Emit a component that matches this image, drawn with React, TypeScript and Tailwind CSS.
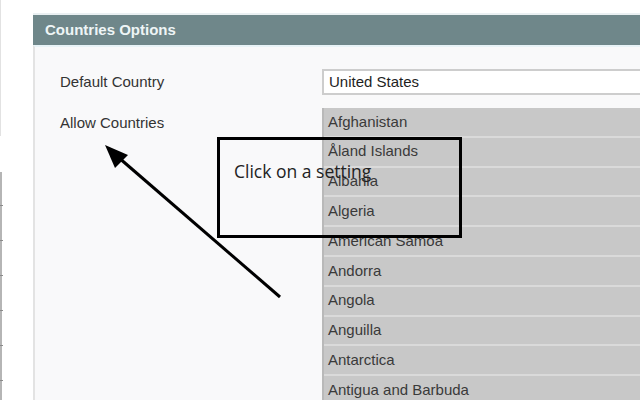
const countries = [
  "Afghanistan",
  "Åland Islands",
  "Albania",
  "Algeria",
  "American Samoa",
  "Andorra",
  "Angola",
  "Anguilla",
  "Antarctica",
  "Antigua and Barbuda",
  "Argentina",
];

const ticks = [205, 240, 275, 310, 345, 380];

export default function App() {
  return (
    <div className="relative flex h-[400px] w-[640px] overflow-hidden bg-white font-['Liberation_Sans',Arial,sans-serif]">
      {/* left edge remnants of a sidebar */}
      <div className="relative w-[33px] shrink-0">
        <div className="absolute left-0 top-0 h-[136px] w-px bg-[#e2e2e2]" />
        <div className="absolute left-0 top-[172px] h-[228px] w-[2px] bg-[#b5b5b5]" />
        {ticks.map((t) => (
          <div key={t} className="absolute left-0 h-px w-[3px] bg-[#8a8a8a]" style={{ top: t }} />
        ))}
      </div>

      <div className="flex min-h-0 flex-1 flex-col pt-[13px]">
        <div className="h-[2px] shrink-0 bg-[#eaf0f2]" />
        <div className="flex h-[30px] shrink-0 items-center bg-[#6f878a] pl-[12px] text-[15px] font-bold text-[#eef5f6]">
          Countries Options
        </div>
        <div className="flex flex-1 flex-col border-l-2 border-t-2 border-[#e3e3e3] border-t-[#e8f3f7] bg-[#f9f9fa] pl-[25px] pt-[22px]">
          <div className="flex shrink-0 items-center">
            <div className="w-[262px] text-[15px] text-[#333]">Default Country</div>
            <div className="flex h-[26px] flex-1 items-center border-2 border-r-0 border-[#cdcdcd] bg-white pl-[5px] text-[15px] text-[#1e1e1e]">
              United States
            </div>
          </div>
          <div className="mt-[13px] flex shrink-0">
            <div className="flex h-[30px] w-[262px] items-center text-[15px] text-[#333]">Allow Countries</div>
            <div className="flex-1 border-l-2 border-[#b9b9b9] bg-[#c8c8c8]">
              {countries.map((c) => (
                <div
                  key={c}
                  className="flex h-[29.8px] items-center border-b-2 border-[#dadada] pl-[4px] text-[15px] text-[#3a3a3a]"
                >
                  {c}
                </div>
              ))}
            </div>
          </div>
        </div>
      </div>

      {/* tooltip overlay */}
      <div className="absolute left-[217px] top-[137px] h-[101px] w-[245px] border-[3px] border-black">
        <div className="pl-[14px] pt-[23px] font-['Open_Sans',sans-serif] text-[17.5px] leading-none text-[#222]">
          Click on a setting
        </div>
      </div>

      <svg className="absolute left-0 top-0" width="640" height="400" viewBox="0 0 640 400">
        <line x1="280" y1="297" x2="118" y2="157" stroke="#000" strokeWidth="3" />
        <polygon points="105,145 128,155 115,168" fill="#000" />
      </svg>
    </div>
  );
}
